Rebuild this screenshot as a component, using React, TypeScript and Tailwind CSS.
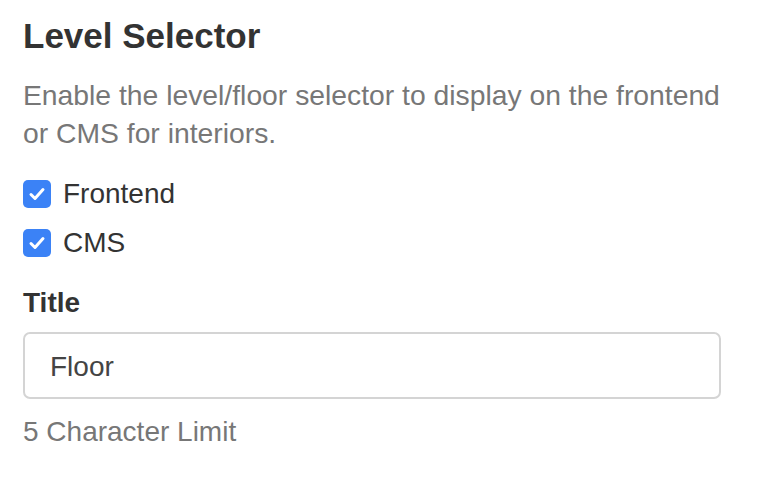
import React from "react";

function Check({ label }: { label: string }) {
    return (
        <label className="flex items-center gap-3 h-[28px]">
            <span className="w-[28px] h-[28px] rounded-[5px] bg-[#3b82f6] flex items-center justify-center">
                <svg width="22" height="22" viewBox="0 0 22 22" fill="none">
                    <path
                        d="M5 11.5 L9 15.5 L17 6.5"
                        stroke="white"
                        strokeWidth="3"
                        strokeLinecap="round"
                        strokeLinejoin="round"
                    />
                </svg>
            </span>
            <span className="text-[28px] text-[#333] leading-[28px]">{label}</span>
        </label>
    );
}

export default function App() {
    return (
        <div
            className="w-[760px] h-[480px] bg-white pl-[23px] pt-[14px]"
            style={{ fontFamily: '"Liberation Sans", Arial, sans-serif' }}
        >
            {/* Heading */}
            <h2 className="text-[35px] font-bold text-[#333] leading-[44px]">Level Selector</h2>

            {/* Description */}
            <p className="mt-[18px] text-[28.3px] leading-[38px] text-[#777] w-[715px]">
                Enable the level/floor selector to display on the frontend or CMS for interiors.
            </p>

            {/* Checkboxes */}
            <div className="mt-[28px] flex flex-col gap-[21px]">
                <Check label="Frontend" />
                <Check label="CMS" />
            </div>

            {/* Title field */}
            <div className="mt-[31px] text-[28px] font-bold text-[#333] leading-[30px]">Title</div>
            <div className="mt-[14px] w-[698px] h-[67px] rounded-[7px] border-2 border-[#d4d4d4] flex items-center px-[25px] pt-[3px]">
                <span className="text-[28px] text-[#444]">Floor</span>
            </div>
            <div className="mt-[18px] text-[28px] text-[#777] leading-[30px]">5 Character Limit</div>
        </div>
    );
}
